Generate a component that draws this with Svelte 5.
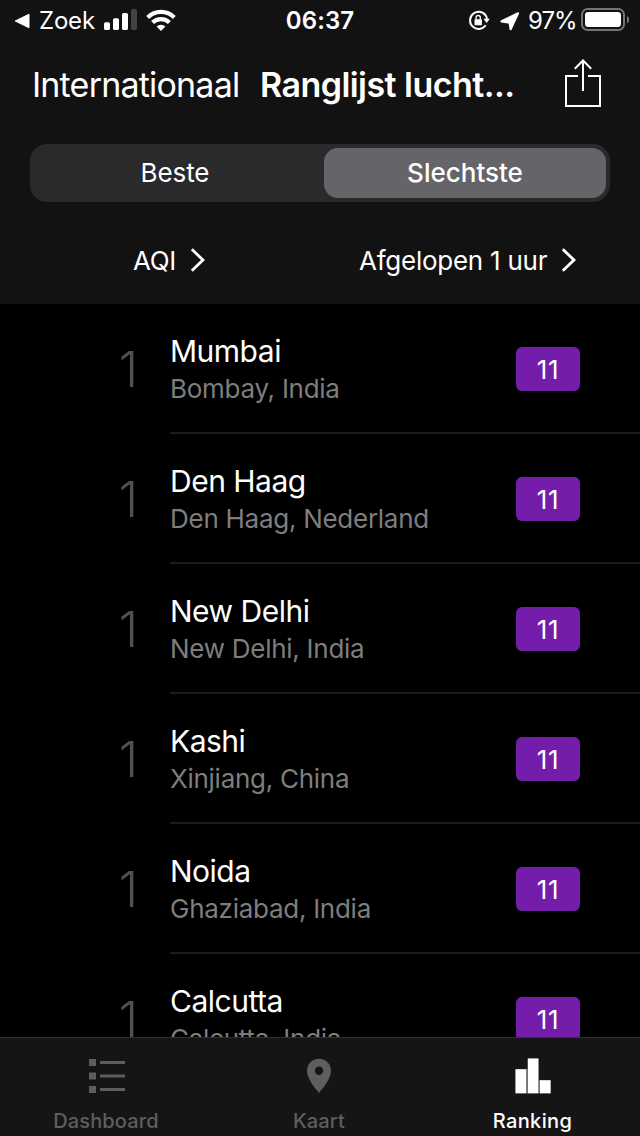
<script>
  const cities = [
    { name: 'Mumbai', region: 'Bombay, India' },
    { name: 'Den Haag', region: 'Den Haag, Nederland' },
    { name: 'New Delhi', region: 'New Delhi, India' },
    { name: 'Kashi', region: 'Xinjiang, China' },
    { name: 'Noida', region: 'Ghaziabad, India' },
    { name: 'Calcutta', region: 'Calcutta, India' }
  ];
</script>

<div class="screen">
  <header>
    <div class="status">
      <div class="left">
        <svg width="16" height="16" viewBox="0 0 16 16"><path d="M1.200 8 15 1.200V14.800Z" fill="#fff" stroke="#fff" stroke-linejoin="round" /></svg>
        <span class="back">Zoek</span>
        <svg class="signal" width="34" height="22" viewBox="0 0 34 22">
          <g fill="#fff"><rect x="0" y="13.2" width="6" height="7.8" rx="1.6" /><rect x="9" y="9.2" width="6" height="11.8" rx="1.6" /><rect x="18" y="4" width="6" height="17" rx="1.6" /></g>
          <rect x="27" y="0" width="6" height="21" rx="1.6" fill="#434343" />
        </svg>
        <svg class="wifi" width="30" height="24" viewBox="0 0 30 24">
          <g fill="none" stroke="#fff" stroke-width="4.2"><path d="M1.7 9.4a19 19 0 0 1 26.6 0" /><path d="M6.6 14.6a12 12 0 0 1 16.8 0" /></g>
          <path d="M10.6 18.6a6.3 6.3 0 0 1 8.8 0L15 23Z" fill="#fff" />
        </svg>
      </div>
      <span class="time">06:37</span>
      <div class="right">
        <svg class="lock" width="22" height="22" viewBox="0 0 22 22">
          <path d="M17.700 15.300A8.600 8.600 0 1 1 17.600 5.300Q19 7.400 18.900 9.500" fill="none" stroke="#fff" stroke-width="2" />
          <path d="M15.500 8.800h6.400l-3.200 4.200Z" fill="#fff" />
          <rect x="6.500" y="9.300" width="7.400" height="5.900" rx=".6" fill="#fff" />
          <path d="M8.100 9.500V7.600a2.100 2.100 0 0 1 4.200 0v1.900" fill="none" stroke="#fff" stroke-width="1.300" />
        </svg>
        <svg class="arrow" width="20" height="19" viewBox="0 0 20 19"><path d="M1.600 9.300 18 1.300 10.600 17.200 9.600 10.700Z" fill="#fff" stroke="#fff" stroke-width="2.200" stroke-linejoin="round" /></svg>
        <span class="pct">97%</span>
        <svg class="battery" width="48" height="24" viewBox="0 0 48 24">
          <rect x="1" y="1" width="42" height="21" rx="5.6" fill="none" stroke="#747474" stroke-width="2" />
          <rect x="4" y="4" width="36" height="15" rx="3.3" fill="#fff" />
          <path d="M46 8q2.300 1.200 2.300 3.600T46 15.200Z" fill="#747474" />
        </svg>
      </div>
    </div>

    <div class="nav">
      <span class="intl">Internationaal</span>
      <span class="title">Ranglijst lucht...</span>
      <svg class="share" width="38" height="50" viewBox="0 0 38 50" fill="none" stroke="#fff" stroke-width="2">
        <path d="M14 17H2V47H36V17H24" /><path d="M19 32V2M10.800 9.700 19 1.500 27.200 9.700" />
      </svg>
    </div>

    <div class="segments">
      <span class="seg beste">Beste</span>
      <span class="seg active">Slechtste</span>
    </div>

    <div class="filters">
      <span class="aqi">AQI</span>
      <svg class="chev" width="16" height="24" viewBox="0 0 16 24"><path d="M1.800 1.300 13 12 1.800 22.700" fill="none" stroke="#fff" stroke-width="2.800" /></svg>
      <span class="period">Afgelopen 1 uur</span>
      <svg class="chev" width="16" height="24" viewBox="0 0 16 24"><path d="M1.800 1.300 13 12 1.800 22.700" fill="none" stroke="#fff" stroke-width="2.800" /></svg>
    </div>
  </header>

  <main>
    {#each cities as city}
      <div class="row">
        <span class="rank">1</span>
        <div class="body">
          <div class="place">
            <div class="name">{city.name}</div>
            <div class="region">{city.region}</div>
          </div>
          <span class="badge">11</span>
        </div>
      </div>
    {/each}
  </main>

  <nav class="tabs">
    <div class="tab">
      <svg class="list" width="36" height="36" viewBox="0 0 36 36" fill="#5e5e5e">
        <path d="M0 1h7v7H0zM0 14.500h7v7H0zM0 28h7v7H0zM11 3h25v3H11zM11 16.500h25v3H11zM11 30h25v3H11z" />
      </svg>
      <span class="t1">Dashboard</span>
    </div>
    <div class="tab">
      <svg width="36" height="36" viewBox="0 0 36 36"><path fill="#5e5e5e" fill-rule="evenodd" d="M18 .8a12 12 0 0 0-12 12c0 7.200 6.500 15.500 12 22.200 5.500-6.700 12-15 12-22.200A12 12 0 0 0 18 .8Zm0 7.700a4.200 4.200 0 1 1 0 8.400 4.200 4.200 0 0 1 0-8.400Z" /></svg>
      <span class="t2">Kaart</span>
    </div>
    <div class="tab on">
      <svg width="36" height="36" viewBox="0 0 36 36"><path fill="#666" d="M.5 11h12V.5h11.500V22h12v13.500H.5z" /><path fill="#fff" d="M.5 11.300h10.700V35.300H.5zM12.900.5h10.400v34.800H12.900zM24.900 22.200h10.600v13.100H24.900z" /></svg>
      <span class="t3">Ranking</span>
    </div>
  </nav>
</div>

<style>
  :global(body) { background: #000; }
  .screen {
    width: 640px; height: 1136px; display: flex; flex-direction: column; overflow: hidden;
    background: #000; color: #fff; font-family: Inter, "Liberation Sans", sans-serif; white-space: nowrap;
  }
  svg { display: block; flex: none; }
  header { height: 304px; flex: none; background: #121212; }
  .status { display: grid; grid-template-columns: 220px 200px 220px; height: 40px; align-items: center; font-size: 24px; line-height: 41px; }
  .left, .right { display: flex; align-items: center; }
  .left { padding-left: 14px; }
  .back { width: 56px; margin-left: 9px; margin-right: 9px; letter-spacing: -.2px; }
  .signal { margin-top: -1px; }
  .wifi { margin-left: 8px; margin-top: -1px; }
  .time { text-align: center; font-weight: 600; letter-spacing: .1px; }
  .right { padding-left: 48px; }
  .arrow { margin-left: 10px; margin-top: 1px; }
  .pct { width: 48px; margin-left: 8px; margin-right: 5px; letter-spacing: -1px; }
  .battery { margin-top: -1px; }

  .nav { height: 88px; display: flex; align-items: center; padding-left: 32px; font-size: 34px; }
  .intl { width: 228px; letter-spacing: -.8px; }
  .title { width: 304px; font-weight: 600; letter-spacing: -.55px; }
  .share { margin-top: 0; }

  .segments { margin: 16px 30px 0; height: 58px; box-sizing: border-box; padding: 4px; border-radius: 17px; background: #2a2a2c; display: flex; font-size: 26px; line-height: 50px; text-align: center; }
  .seg { width: 282px; border-radius: 14px; }
  .beste { margin-right: 8px; letter-spacing: -.1px; }
  .active { background: #656468; font-weight: 550; letter-spacing: 0; }

  .filters { height: 116px; display: flex; align-items: center; padding-left: 133px; font-size: 26px; }
  .aqi { width: 57px; letter-spacing: -.3px; }
  .period { width: 202px; margin-left: 153px; letter-spacing: -.25px; }

  main { flex: 1; min-height: 0; overflow: hidden; }
  .row { height: 130px; display: flex; }
  .rank { width: 138px; padding-right: 32px; text-align: right; font-size: 49px; font-weight: 300; line-height: 131px; color: #505050; }
  .body { flex: 1; box-sizing: border-box; border-bottom: 2px solid #1c1c1e; display: flex; justify-content: space-between; padding: 29px 60px 0 0; }
  .name { font-size: 30px; line-height: 37px; letter-spacing: -.5px; }
  .region { font-size: 26px; line-height: 38px; color: #7e7e7e; letter-spacing: -.27px; }
  .badge { width: 64px; height: 44px; margin-top: 14px; border-radius: 6px; background: #741dab; font-size: 26px; line-height: 46px; text-align: center; letter-spacing: .6px; }

  .tabs { height: 98px; flex: none; border-top: 1px solid #303030; background: #151515; display: grid; grid-template-columns: 212px 214px 214px; font-size: 20px; font-weight: 500; color: #5e5e5e; }
  .tab { display: flex; flex-direction: column; align-items: center; padding-top: 20px; }
  .tab span { line-height: 29px; margin-top: 13px; letter-spacing: .15px; }
  .list { margin-left: 2px; }
  .on { color: #fff; }
  .on .t3 { letter-spacing: .4px; margin-right: 1px; }
</style>
